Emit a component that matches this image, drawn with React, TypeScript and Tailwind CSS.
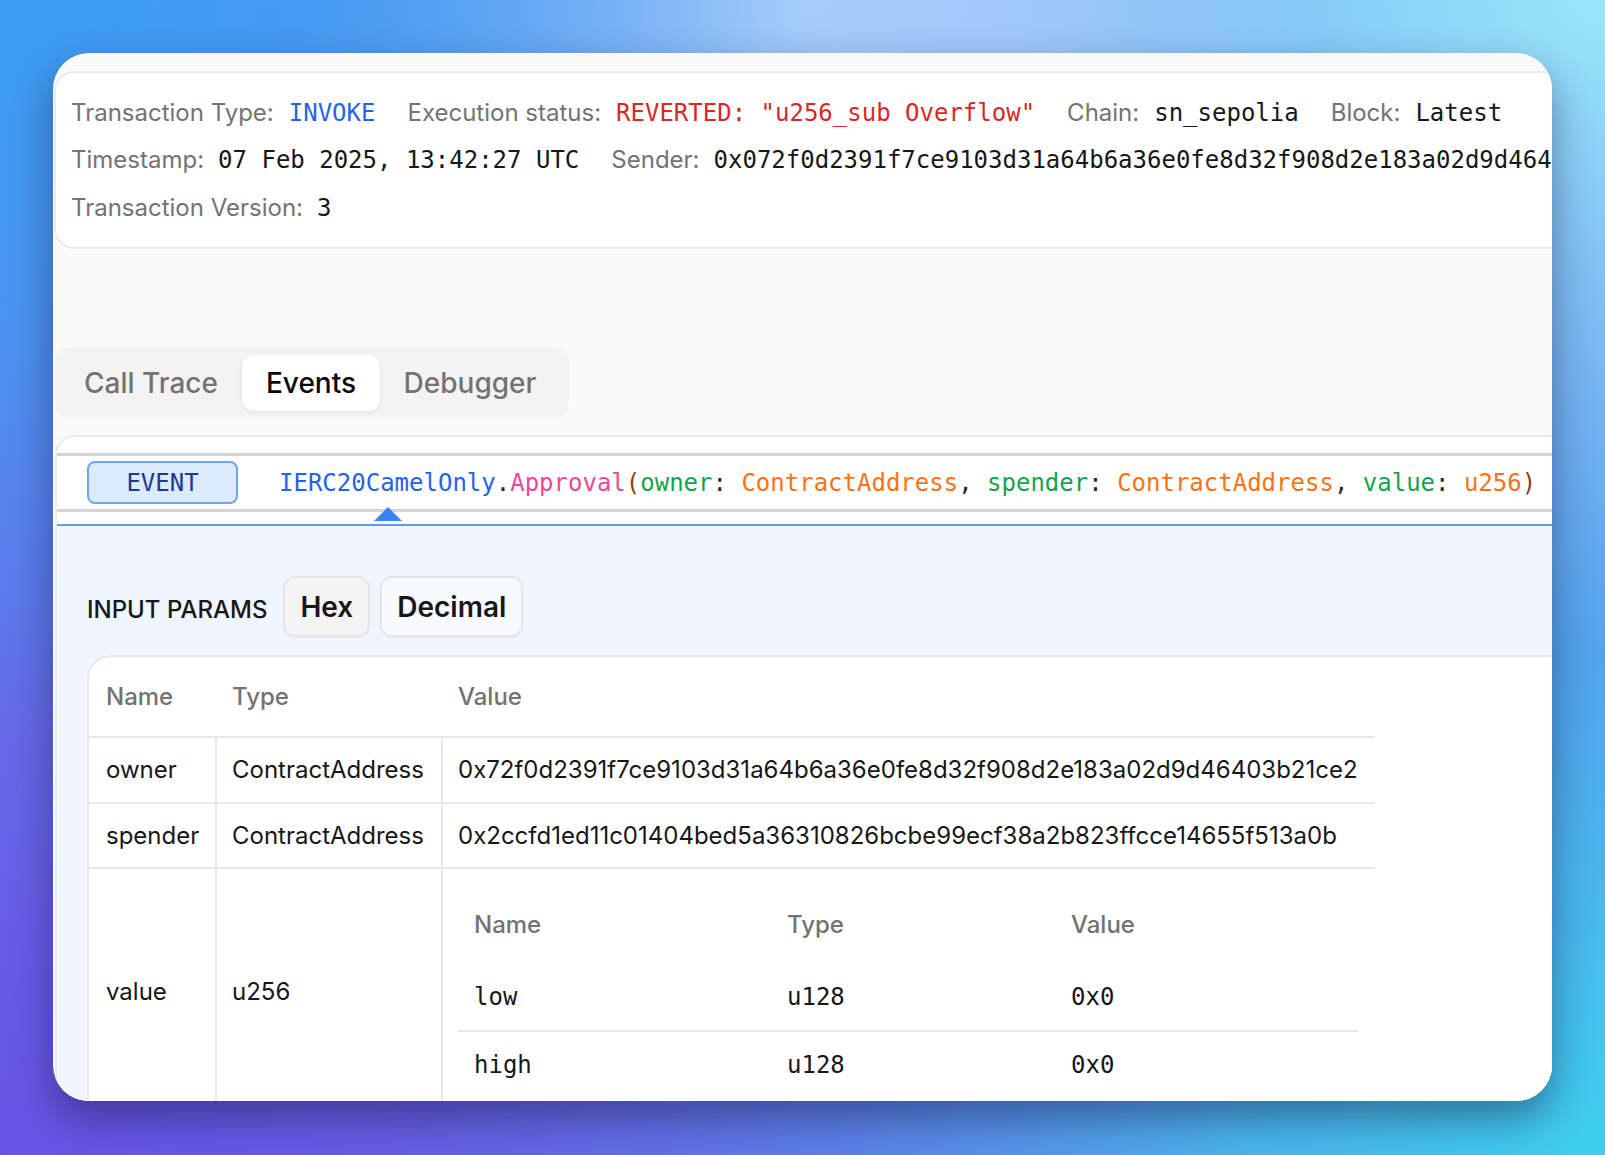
import React from "react";

const mono = "font-['DejaVu_Sans_Mono',monospace]";

const Field = ({ label, children, gap = "gap-[15px]" }: { label: string; children: React.ReactNode; gap?: string }) => (
    <div className={`flex items-center ${gap}`}>
        <span className="text-[#737373]">{label}</span>
        {children}
    </div>
);

const Sig = () => (
    <span className={`${mono} text-[24px] whitespace-nowrap text-[#262626]`}>
        <span className="text-[#2563eb]">IERC20CamelOnly</span>.<span className="text-[#ec4899]">Approval</span>
        <span className="text-[#92400e]">(</span>
        <span className="text-[#16a34a]">owner</span>: <span className="text-[#f97316]">ContractAddress</span>,{" "}
        <span className="text-[#16a34a]">spender</span>: <span className="text-[#f97316]">ContractAddress</span>,{" "}
        <span className="text-[#16a34a]">value</span>: <span className="text-[#f97316]">u256</span>
        <span className="text-[#92400e]">)</span>
    </span>
);

export default function App() {
    return (
        <div className="relative h-[1155px] w-full overflow-hidden bg-[radial-gradient(ellipse_at_0%_0%,#3b9cf2_0%,transparent_45%),radial-gradient(ellipse_at_50%_0%,#c4dafc_0%,transparent_45%),radial-gradient(ellipse_at_100%_0%,#9ae6fa_0%,transparent_40%),radial-gradient(ellipse_at_0%_100%,#6654e6_0%,transparent_55%),radial-gradient(ellipse_at_100%_100%,#3dd0ef_0%,transparent_55%),linear-gradient(180deg,#5b94f0,#6a74e8)] pl-[53px] pt-[53px] font-['Inter',sans-serif]">
            <div className="h-[1048px] w-[1499px] overflow-hidden rounded-[36px] bg-[#fafafa] shadow-[0_18px_40px_rgba(20,20,60,0.45)]">
                <div className="pl-px pt-[18px]">
                    {/* transaction header */}
                    <div className="h-[178px] w-[1560px] rounded-l-[20px] border-2 border-[#ebebeb] bg-white pl-[15px] pt-[16px] text-[24px] whitespace-nowrap">
                        <div className="flex h-[47.5px] items-center gap-8">
                            <Field label="Transaction Type:">
                                <span className={`${mono} text-[#2563eb]`}>INVOKE</span>
                            </Field>
                            <Field label="Execution status:">
                                <span className={`${mono} text-[#dc2626]`}>REVERTED: "u256_sub Overflow"</span>
                            </Field>
                            <Field label="Chain:">
                                <span className={`${mono} text-[#171717]`}>sn_sepolia</span>
                            </Field>
                            <Field label="Block:">
                                <span className={`${mono} text-[#171717]`}>Latest</span>
                            </Field>
                        </div>
                        <div className="flex h-[47.5px] items-center gap-8">
                            <Field label="Timestamp:" gap="gap-[14px]">
                                <span className={`${mono} text-[#171717]`}>07 Feb 2025, 13:42:27 UTC</span>
                            </Field>
                            <Field label="Sender:" gap="gap-[14px]">
                                <span className={`${mono} text-[#171717]`}>
                                    0x072f0d2391f7ce9103d31a64b6a36e0fe8d32f908d2e183a02d9d46403b21ce2
                                </span>
                            </Field>
                        </div>
                        <div className="flex h-[47.5px] items-center">
                            <Field label="Transaction Version:" gap="gap-[14px]">
                                <span className={`${mono} text-[#171717]`}>3</span>
                            </Field>
                        </div>
                    </div>

                    {/* tabs */}
                    <div className="ml-px mt-[98px] flex h-[71px] w-[514px] items-center rounded-[16px] bg-[#f3f3f3] px-[5px] text-[28px] font-medium">
                        <div className="flex h-14 w-[182px] items-center justify-center text-[#737373]">Call Trace</div>
                        <div className="flex h-14 w-[138px] items-center justify-center rounded-[12px] bg-white text-[#0a0a0a] shadow-[0_1px_4px_rgba(0,0,0,0.08)]">
                            Events
                        </div>
                        <div className="flex h-14 w-[180px] items-center justify-center text-[#737373]">Debugger</div>
                    </div>

                    {/* event panel */}
                    <div className="relative ml-px mt-[17px] w-[1560px] rounded-tl-[20px] border-l-2 border-t-2 border-[#ebebeb] bg-white pt-[16px]">
                        <div className="flex h-[59px] items-center border-y-[3px] border-[#d6d6d6] pl-[30px]">
                            <div className={`${mono} flex h-[43px] w-[151px] items-center justify-center rounded-[8px] border-2 border-[#6aa8f7] bg-[#dbeafe] text-[24px] text-[#1e3a8a]`}>
                                EVENT
                            </div>
                            <div className="ml-[41px]">
                                <Sig />
                            </div>
                        </div>
                        <div className="h-[14px] border-b-2 border-[#5b9cf5]" />
                        <div className="absolute left-[317px] top-[70px] h-0 w-0 border-x-[14px] border-b-[14px] border-x-transparent border-b-[#3b82f6]" />

                        {/* input params */}
                        <div className="bg-[#eff6ff] pl-[30px] pt-[50px]">
                            <div className="flex items-center">
                                <span className="pt-[7px] text-[24px] font-medium text-[#171717]">INPUT PARAMS</span>
                                <button className="ml-[16px] h-[61px] rounded-[12px] border-2 border-[#e6e6e6] bg-[#f4f4f4] px-[15px] text-[28px] font-semibold text-[#171717] shadow-[0_1px_2px_rgba(0,0,0,0.05)]">
                                    Hex
                                </button>
                                <button className="ml-[10px] h-[61px] rounded-[12px] border-2 border-[#e6e6e6] bg-white/50 px-[15px] text-[28px] font-semibold text-[#171717] shadow-[0_1px_2px_rgba(0,0,0,0.05)]">
                                    Decimal
                                </button>
                            </div>

                            <div className="mt-[18px] h-[480px] rounded-tl-[24px] border-l-2 border-t-2 border-[#e8e8e8] bg-white text-[24px] text-[#171717]">
                                <div className="w-[1286px]">
                                    <div className="flex h-[81px] items-center border-b-2 border-[#e8e8e8] font-medium text-[#737373]">
                                        <div className="w-[126px] pl-[17px]">Name</div>
                                        <div className="w-[226px] pl-[17px]">Type</div>
                                        <div className="pl-[17px]">Value</div>
                                    </div>
                                    <div className="flex h-[66px] border-b-2 border-[#e8e8e8]">
                                        <div className="flex w-[126px] items-center pl-[17px]">owner</div>
                                        <div className="flex w-[226px] items-center border-l-2 border-[#e8e8e8] pl-[15px]">ContractAddress</div>
                                        <div className="flex flex-1 items-center border-l-2 border-[#e8e8e8] pl-[15px] whitespace-nowrap">
                                            0x72f0d2391f7ce9103d31a64b6a36e0fe8d32f908d2e183a02d9d46403b21ce2
                                        </div>
                                    </div>
                                    <div className="flex h-[65px] border-b-2 border-[#e8e8e8]">
                                        <div className="flex w-[126px] items-center pl-[17px]">spender</div>
                                        <div className="flex w-[226px] items-center border-l-2 border-[#e8e8e8] pl-[15px]">ContractAddress</div>
                                        <div className="flex flex-1 items-center border-l-2 border-[#e8e8e8] pl-[15px] whitespace-nowrap">
                                            0x2ccfd1ed11c01404bed5a36310826bcbe99ecf38a2b823ffcce14655f513a0b
                                        </div>
                                    </div>
                                    <div className="flex h-[245px]">
                                        <div className="flex w-[126px] items-center pl-[17px]">value</div>
                                        <div className="flex w-[226px] items-center border-l-2 border-[#e8e8e8] pl-[15px]">u256</div>
                                        <div className="flex-1 border-l-2 border-[#e8e8e8] pl-[15px] pt-[17px]">
                                            <div className="w-[900px]">
                                                <div className="flex h-[78px] items-center font-medium text-[#737373]">
                                                    <div className="w-[312px] pl-[16px]">Name</div>
                                                    <div className="w-[284px] pl-[17px]">Type</div>
                                                    <div className="pl-[17px]">Value</div>
                                                </div>
                                                <div className={`${mono} flex h-[68px] items-center border-b-2 border-[#e8e8e8]`}>
                                                    <div className="w-[312px] pl-[16px]">low</div>
                                                    <div className="w-[284px] pl-[17px]">u128</div>
                                                    <div className="pl-[17px]">0x0</div>
                                                </div>
                                                <div className={`${mono} flex h-[65px] items-center`}>
                                                    <div className="w-[312px] pl-[16px]">high</div>
                                                    <div className="w-[284px] pl-[17px]">u128</div>
                                                    <div className="pl-[17px]">0x0</div>
                                                </div>
                                            </div>
                                        </div>
                                    </div>
                                </div>
                            </div>
                        </div>
                    </div>
                </div>
            </div>
        </div>
    );
}
